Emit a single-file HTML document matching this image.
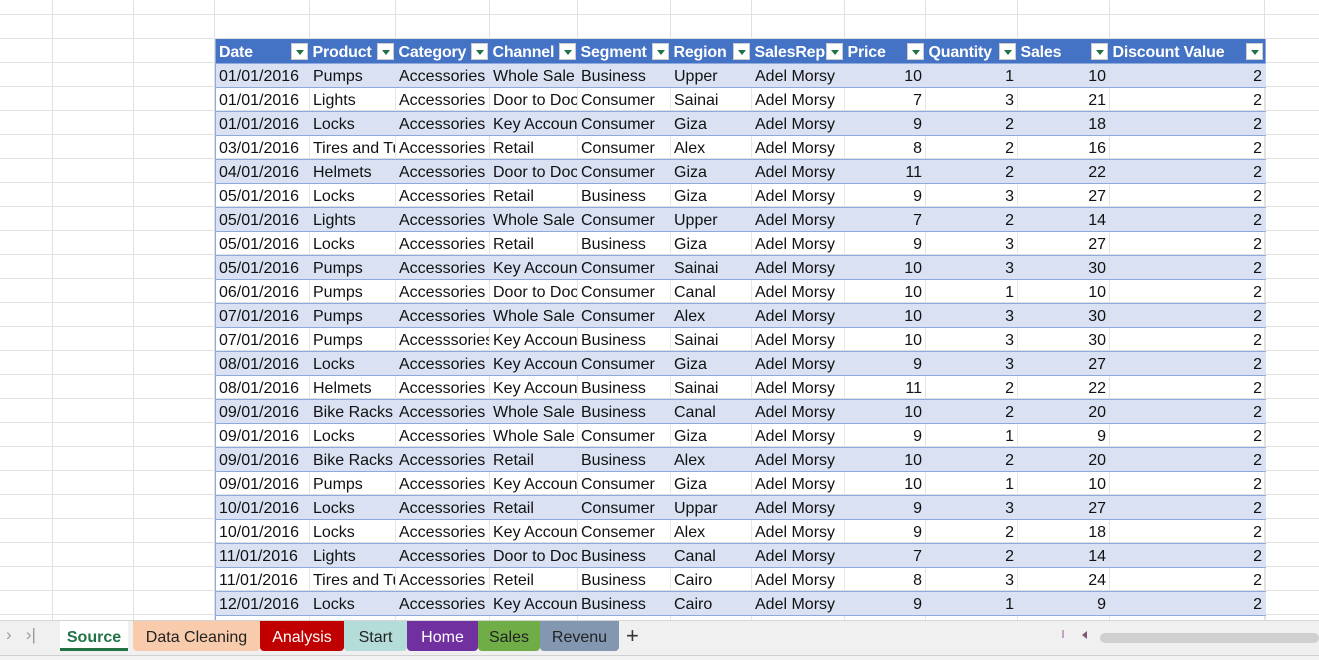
<!DOCTYPE html>
<html><head><meta charset="utf-8"><style>
*{margin:0;padding:0;box-sizing:border-box}
body{width:1319px;height:660px;overflow:hidden;background:#fff;position:relative;font-family:"Liberation Sans",sans-serif;}
.vl{position:absolute;top:0;height:620px;width:1px;background:#e1e1e1}
.hl{position:absolute;left:0;width:1319px;height:1px;background:#e1e1e1}
table{position:absolute;left:215px;top:39px;border-collapse:collapse;table-layout:fixed;width:1050px;font-size:16px;color:#111}
td,th{height:24px;white-space:nowrap;overflow:hidden;padding:3px 3px 0 3px;border-bottom:1px solid #8ea9db;line-height:20px}
th{background:#4472c4;color:#fff;text-align:left;font-weight:bold;position:relative;font-size:16px;letter-spacing:-0.2px;padding-top:4px}
th i{position:absolute;right:2px;top:4px;width:17px;height:17px;background:#fff;border:1px solid #ccc}
th i:after{content:"";position:absolute;left:4px;top:6px;border-left:4px solid transparent;border-right:4px solid transparent;border-top:5px solid #217346}
tbody tr:nth-child(odd) td{background:#d9e1f2;border-right:1px solid #d9e1f2}
tbody tr:nth-child(even) td{border-right:1px solid #e6e6e6}
td.n{text-align:right}
.tabs{position:absolute;left:0;top:620px;width:1319px;height:35px;background:#f0f0f0;border-top:1px solid #d5d5d5}
.tab{position:absolute;top:0;height:30px;font-size:16px;line-height:33px;text-align:center;border-radius:0 0 4px 4px}
.status{position:absolute;left:0;top:655px;width:1319px;height:5px;background:#f3f3f3;border-top:1px solid #d0d0d0}
</style></head><body>
<div style="position:absolute;left:0;top:39px;width:1319px;height:580px;background:repeating-linear-gradient(#fff 0 23px,#e1e1e1 23px 24px)"></div>
<div class="vl" style="left:52px"></div><div class="vl" style="left:133px"></div><div class="vl" style="left:214px"></div>
<div class="vl" style="left:309px"></div><div class="vl" style="left:395px"></div><div class="vl" style="left:489px"></div><div class="vl" style="left:577px"></div><div class="vl" style="left:670px"></div><div class="vl" style="left:751px"></div><div class="vl" style="left:844px"></div><div class="vl" style="left:925px"></div><div class="vl" style="left:1017px"></div><div class="vl" style="left:1109px"></div><div class="vl" style="left:1264px"></div>
<div class="hl" style="top:14px"></div><div class="hl" style="top:38px"></div>
<table style="border-left:1px solid #8ea9db;border-right:1px solid #8ea9db">
<colgroup><col style="width:94px"><col style="width:86px"><col style="width:94px"><col style="width:88px"><col style="width:93px"><col style="width:81px"><col style="width:93px"><col style="width:81px"><col style="width:92px"><col style="width:92px"><col style="width:156px"></colgroup>
<thead><tr><th>Date<i></i></th><th>Product<i></i></th><th>Category<i></i></th><th>Channel<i></i></th><th>Segment<i></i></th><th>Region<i></i></th><th>SalesRep<i></i></th><th>Price<i></i></th><th>Quantity<i></i></th><th>Sales<i></i></th><th>Discount Value<i></i></th></tr></thead>
<tbody>
<tr><td>01/01/2016</td><td>Pumps</td><td>Accessories</td><td>Whole Sale</td><td>Business</td><td>Upper</td><td>Adel Morsy</td><td class="n">10</td><td class="n">1</td><td class="n">10</td><td class="n">2</td></tr>
<tr><td>01/01/2016</td><td>Lights</td><td>Accessories</td><td>Door to Door</td><td>Consumer</td><td>Sainai</td><td>Adel Morsy</td><td class="n">7</td><td class="n">3</td><td class="n">21</td><td class="n">2</td></tr>
<tr><td>01/01/2016</td><td>Locks</td><td>Accessories</td><td>Key Account</td><td>Consumer</td><td>Giza</td><td>Adel Morsy</td><td class="n">9</td><td class="n">2</td><td class="n">18</td><td class="n">2</td></tr>
<tr><td>03/01/2016</td><td>Tires and Tubes</td><td>Accessories</td><td>Retail</td><td>Consumer</td><td>Alex</td><td>Adel Morsy</td><td class="n">8</td><td class="n">2</td><td class="n">16</td><td class="n">2</td></tr>
<tr><td>04/01/2016</td><td>Helmets</td><td>Accessories</td><td>Door to Door</td><td>Consumer</td><td>Giza</td><td>Adel Morsy</td><td class="n">11</td><td class="n">2</td><td class="n">22</td><td class="n">2</td></tr>
<tr><td>05/01/2016</td><td>Locks</td><td>Accessories</td><td>Retail</td><td>Business</td><td>Giza</td><td>Adel Morsy</td><td class="n">9</td><td class="n">3</td><td class="n">27</td><td class="n">2</td></tr>
<tr><td>05/01/2016</td><td>Lights</td><td>Accessories</td><td>Whole Sale</td><td>Consumer</td><td>Upper</td><td>Adel Morsy</td><td class="n">7</td><td class="n">2</td><td class="n">14</td><td class="n">2</td></tr>
<tr><td>05/01/2016</td><td>Locks</td><td>Accessories</td><td>Retail</td><td>Business</td><td>Giza</td><td>Adel Morsy</td><td class="n">9</td><td class="n">3</td><td class="n">27</td><td class="n">2</td></tr>
<tr><td>05/01/2016</td><td>Pumps</td><td>Accessories</td><td>Key Account</td><td>Consumer</td><td>Sainai</td><td>Adel Morsy</td><td class="n">10</td><td class="n">3</td><td class="n">30</td><td class="n">2</td></tr>
<tr><td>06/01/2016</td><td>Pumps</td><td>Accessories</td><td>Door to Door</td><td>Consumer</td><td>Canal</td><td>Adel Morsy</td><td class="n">10</td><td class="n">1</td><td class="n">10</td><td class="n">2</td></tr>
<tr><td>07/01/2016</td><td>Pumps</td><td>Accessories</td><td>Whole Sale</td><td>Consumer</td><td>Alex</td><td>Adel Morsy</td><td class="n">10</td><td class="n">3</td><td class="n">30</td><td class="n">2</td></tr>
<tr><td>07/01/2016</td><td>Pumps</td><td>Accesssories</td><td>Key Account</td><td>Business</td><td>Sainai</td><td>Adel Morsy</td><td class="n">10</td><td class="n">3</td><td class="n">30</td><td class="n">2</td></tr>
<tr><td>08/01/2016</td><td>Locks</td><td>Accessories</td><td>Key Account</td><td>Consumer</td><td>Giza</td><td>Adel Morsy</td><td class="n">9</td><td class="n">3</td><td class="n">27</td><td class="n">2</td></tr>
<tr><td>08/01/2016</td><td>Helmets</td><td>Accessories</td><td>Key Account</td><td>Business</td><td>Sainai</td><td>Adel Morsy</td><td class="n">11</td><td class="n">2</td><td class="n">22</td><td class="n">2</td></tr>
<tr><td>09/01/2016</td><td>Bike Racks</td><td>Accessories</td><td>Whole Sale</td><td>Business</td><td>Canal</td><td>Adel Morsy</td><td class="n">10</td><td class="n">2</td><td class="n">20</td><td class="n">2</td></tr>
<tr><td>09/01/2016</td><td>Locks</td><td>Accessories</td><td>Whole Sale</td><td>Consumer</td><td>Giza</td><td>Adel Morsy</td><td class="n">9</td><td class="n">1</td><td class="n">9</td><td class="n">2</td></tr>
<tr><td>09/01/2016</td><td>Bike Racks</td><td>Accessories</td><td>Retail</td><td>Business</td><td>Alex</td><td>Adel Morsy</td><td class="n">10</td><td class="n">2</td><td class="n">20</td><td class="n">2</td></tr>
<tr><td>09/01/2016</td><td>Pumps</td><td>Accessories</td><td>Key Account</td><td>Consumer</td><td>Giza</td><td>Adel Morsy</td><td class="n">10</td><td class="n">1</td><td class="n">10</td><td class="n">2</td></tr>
<tr><td>10/01/2016</td><td>Locks</td><td>Accessories</td><td>Retail</td><td>Consumer</td><td>Uppar</td><td>Adel Morsy</td><td class="n">9</td><td class="n">3</td><td class="n">27</td><td class="n">2</td></tr>
<tr><td>10/01/2016</td><td>Locks</td><td>Accessories</td><td>Key Account</td><td>Consemer</td><td>Alex</td><td>Adel Morsy</td><td class="n">9</td><td class="n">2</td><td class="n">18</td><td class="n">2</td></tr>
<tr><td>11/01/2016</td><td>Lights</td><td>Accessories</td><td>Door to Door</td><td>Business</td><td>Canal</td><td>Adel Morsy</td><td class="n">7</td><td class="n">2</td><td class="n">14</td><td class="n">2</td></tr>
<tr><td>11/01/2016</td><td>Tires and Tubes</td><td>Accessories</td><td>Reteil</td><td>Business</td><td>Cairo</td><td>Adel Morsy</td><td class="n">8</td><td class="n">3</td><td class="n">24</td><td class="n">2</td></tr>
<tr><td>12/01/2016</td><td>Locks</td><td>Accessories</td><td>Key Account</td><td>Business</td><td>Cairo</td><td>Adel Morsy</td><td class="n">9</td><td class="n">1</td><td class="n">9</td><td class="n">2</td></tr>
<tr><td>13/01/2016</td><td>Locks</td><td>Accessories</td><td>Retail</td><td>Business</td><td>Giza</td><td>Adel Morsy</td><td class="n">9</td><td class="n">1</td><td class="n">9</td><td class="n">2</td></tr>
</tbody></table>
<div class="tabs">
<div style="position:absolute;left:6px;top:4px;color:#999;font-size:17px">›&nbsp;&nbsp;&nbsp;›|</div>
<div class="tab" style="left:60px;width:68px;background:#fff;color:#217346;font-weight:bold;border-bottom:3px solid #217346;border-radius:0">Source</div>
<div class="tab" style="left:133px;width:127px;background:#f8cbad;color:#222">Data Cleaning</div>
<div class="tab" style="left:260px;width:84px;background:#c00000;color:#fff">Analysis</div>
<div class="tab" style="left:344px;width:63px;background:#b4dcd9;color:#222">Start</div>
<div class="tab" style="left:407px;width:71px;background:#7030a0;color:#fff">Home</div>
<div class="tab" style="left:478px;width:62px;background:#70ad47;color:#222">Sales</div>
<div class="tab" style="left:540px;width:79px;background:#8497b0;color:#222">Revenu</div>
<div style="position:absolute;left:626px;top:2px;font-size:22px;color:#333">+</div>
<div style="position:absolute;left:1062px;top:9px;width:2px;height:8px;background:#c9a0c9"></div>
<div style="position:absolute;left:1082px;top:10px;border-top:4px solid transparent;border-bottom:4px solid transparent;border-right:5px solid #7a5a7a"></div>
<div style="position:absolute;left:1100px;top:12px;width:219px;height:10px;background:#d0d0d0;border-radius:5px"></div>
</div>
<div class="status"></div>
</body></html>
